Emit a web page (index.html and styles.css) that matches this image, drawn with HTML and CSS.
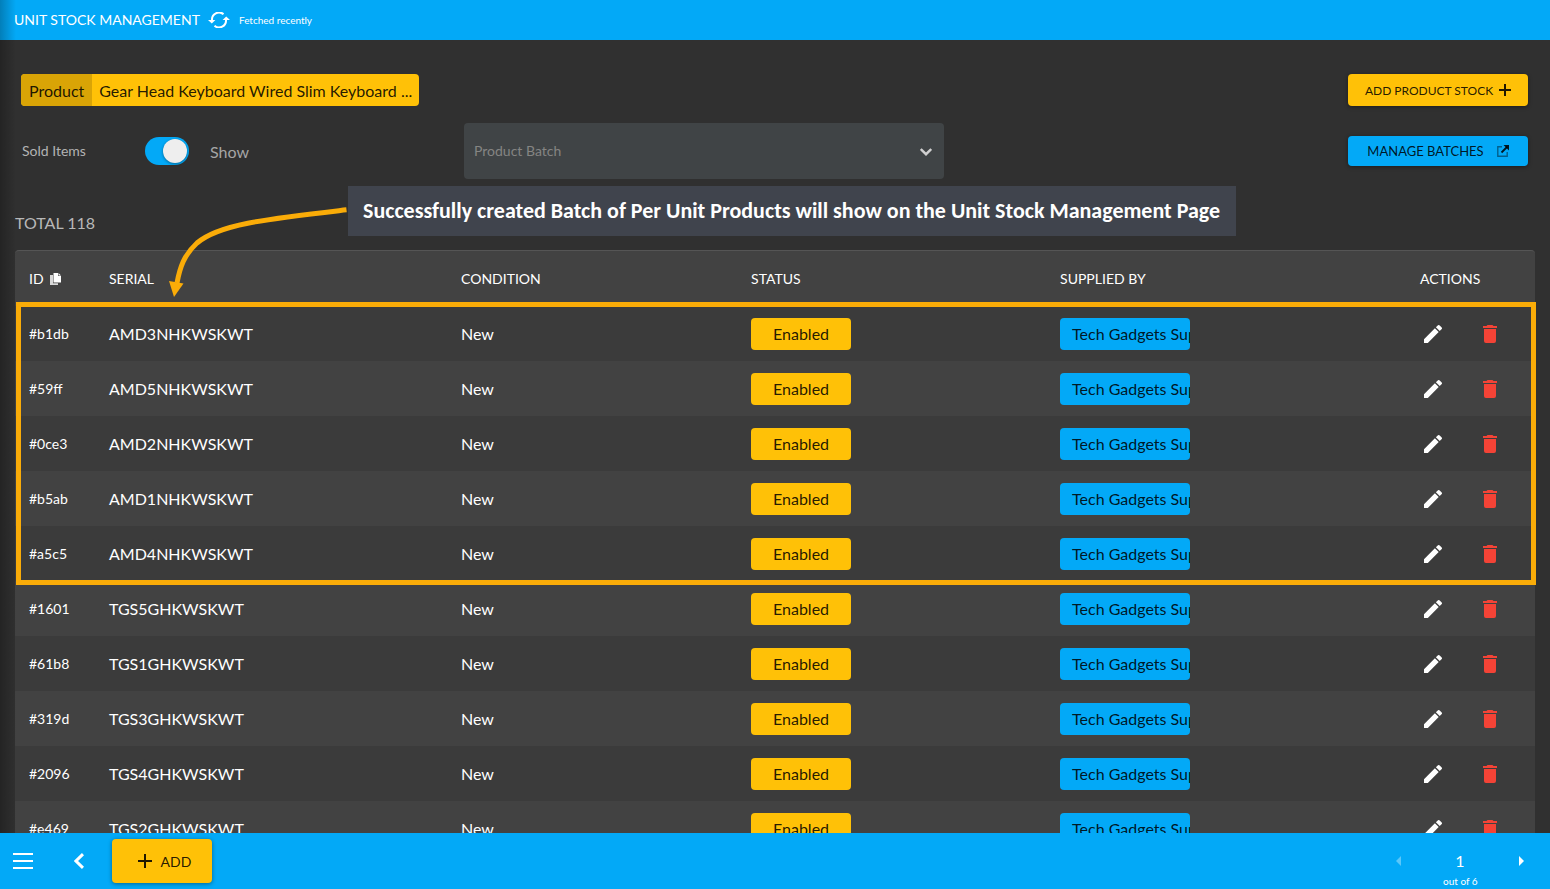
FILE: index.html
```html
<!DOCTYPE html>
<html lang="en">
<head>
<meta charset="utf-8">
<title>Unit Stock Management</title>
<link rel="stylesheet" href="styles.css">
</head>
<body>
<svg class="sprite" aria-hidden="true">
  <symbol id="pencil" viewBox="0 0 18 18"><path d="M0 14.2 10.9 3.3l3.8 3.8L3.8 18H0zM11.9 2.3 13.7.5a1.4 1.4 0 0 1 2 0l1.8 1.8a1.4 1.4 0 0 1 0 2l-1.8 1.8z"/></symbol>
  <symbol id="trash" viewBox="0 0 14 18"><path d="M0 1h3.500l1-1h5l1 1H14v2H0zM1 4h12v12a2 2 0 0 1-2 2H3a2 2 0 0 1-2-2z"/></symbol>
</svg>
<header class="topbar">
  <h1 class="topbar-title">UNIT STOCK MANAGEMENT</h1>
  <button class="icon-btn refresh" aria-label="Refresh">
    <svg width="22" height="16" viewBox="0 0 22 16" fill="none" stroke="currentColor" stroke-width="2"><path d="M15.5 2.2A7 7 0 0 0 4 8M6.5 13.8A7 7 0 0 0 18 8"/><path d="M0 8h7.4L3.8 11.400zM14.600 8H22L18.200 4.600z" fill="currentColor" stroke="none"/></svg>
  </button>
  <span class="topbar-note">Fetched recently</span>
</header>
<main class="content">
  <div class="product-row">
    <div class="product-chip"><span class="chip-label">Product</span><span class="chip-value">Gear Head Keyboard Wired Slim Keyboard ...</span></div>
    <button class="btn btn-amber btn-stock">ADD PRODUCT STOCK
      <svg width="12" height="12" viewBox="0 0 12 12" fill="none" stroke="currentColor" stroke-width="2"><path d="M6 0v12M0 6h12"/></svg>
    </button>
  </div>
  <div class="filter-row">
    <div class="sold">
      <label class="sold-label" for="sold">Sold Items</label>
      <input class="switch" id="sold" type="checkbox" role="switch" checked>
      <span class="sold-state">Show</span>
    </div>
    <div class="batch">
      <select class="batch-select" aria-label="Product Batch"><option>Product Batch</option></select>
      <svg class="batch-arrow" width="12" height="8" viewBox="0 0 12 8" fill="none" stroke="currentColor" stroke-width="2.400"><path d="m.8 1 5.200 5.200L11.200 1"/></svg>
    </div>
    <button class="btn btn-blue btn-batches">MANAGE BATCHES
      <svg width="12" height="12" viewBox="0 0 12 12" fill="none" stroke="currentColor"><path d="M5 1.800H.8v9.400h9.400V7" stroke-width="1.400" opacity=".5"/><path d="M4.500 7.500 10 2" stroke-width="1.800"/><path d="M6.500 0H12v5.500z" fill="currentColor" stroke="none"/></svg>
    </button>
  </div>
  <p class="total">TOTAL 118</p>
  <div class="table-wrap">
    <table class="stock">
      <colgroup><col class="col-id"><col class="col-serial"><col class="col-condition"><col class="col-status"><col class="col-supplier"><col class="col-actions"></colgroup>
      <thead>
        <tr><th>ID <svg class="copy" width="11" height="12" viewBox="0 0 11 12" fill="currentColor"><path d="M3.500 0H8v3h3v6.500H3.500z"/><path d="M8.500 0 11 2.500H8.500z"/><path d="M0 2h3v8.200h5V12H0z" opacity=".8"/></svg></th><th>SERIAL</th><th>CONDITION</th><th>STATUS</th><th>SUPPLIED BY</th><th>ACTIONS</th></tr>
      </thead>
      <tbody>
        <tr><td class="id">#b1db</td><td>AMD3NHKWSKWT</td><td>New</td><td><button class="tag tag-status">Enabled</button></td><td><button class="tag tag-supplier">Tech Gadgets Sup</button></td><td><div class="actions"><button class="icon-btn" aria-label="Edit"><svg width="18" height="18"><use href="#pencil"/></svg></button><button class="icon-btn delete" aria-label="Delete"><svg width="14" height="18"><use href="#trash"/></svg></button></div></td></tr>
        <tr><td class="id">#59ff</td><td>AMD5NHKWSKWT</td><td>New</td><td><button class="tag tag-status">Enabled</button></td><td><button class="tag tag-supplier">Tech Gadgets Sup</button></td><td><div class="actions"><button class="icon-btn" aria-label="Edit"><svg width="18" height="18"><use href="#pencil"/></svg></button><button class="icon-btn delete" aria-label="Delete"><svg width="14" height="18"><use href="#trash"/></svg></button></div></td></tr>
        <tr><td class="id">#0ce3</td><td>AMD2NHKWSKWT</td><td>New</td><td><button class="tag tag-status">Enabled</button></td><td><button class="tag tag-supplier">Tech Gadgets Sup</button></td><td><div class="actions"><button class="icon-btn" aria-label="Edit"><svg width="18" height="18"><use href="#pencil"/></svg></button><button class="icon-btn delete" aria-label="Delete"><svg width="14" height="18"><use href="#trash"/></svg></button></div></td></tr>
        <tr><td class="id">#b5ab</td><td>AMD1NHKWSKWT</td><td>New</td><td><button class="tag tag-status">Enabled</button></td><td><button class="tag tag-supplier">Tech Gadgets Sup</button></td><td><div class="actions"><button class="icon-btn" aria-label="Edit"><svg width="18" height="18"><use href="#pencil"/></svg></button><button class="icon-btn delete" aria-label="Delete"><svg width="14" height="18"><use href="#trash"/></svg></button></div></td></tr>
        <tr><td class="id">#a5c5</td><td>AMD4NHKWSKWT</td><td>New</td><td><button class="tag tag-status">Enabled</button></td><td><button class="tag tag-supplier">Tech Gadgets Sup</button></td><td><div class="actions"><button class="icon-btn" aria-label="Edit"><svg width="18" height="18"><use href="#pencil"/></svg></button><button class="icon-btn delete" aria-label="Delete"><svg width="14" height="18"><use href="#trash"/></svg></button></div></td></tr>
        <tr><td class="id">#1601</td><td>TGS5GHKWSKWT</td><td>New</td><td><button class="tag tag-status">Enabled</button></td><td><button class="tag tag-supplier">Tech Gadgets Sup</button></td><td><div class="actions"><button class="icon-btn" aria-label="Edit"><svg width="18" height="18"><use href="#pencil"/></svg></button><button class="icon-btn delete" aria-label="Delete"><svg width="14" height="18"><use href="#trash"/></svg></button></div></td></tr>
        <tr><td class="id">#61b8</td><td>TGS1GHKWSKWT</td><td>New</td><td><button class="tag tag-status">Enabled</button></td><td><button class="tag tag-supplier">Tech Gadgets Sup</button></td><td><div class="actions"><button class="icon-btn" aria-label="Edit"><svg width="18" height="18"><use href="#pencil"/></svg></button><button class="icon-btn delete" aria-label="Delete"><svg width="14" height="18"><use href="#trash"/></svg></button></div></td></tr>
        <tr><td class="id">#319d</td><td>TGS3GHKWSKWT</td><td>New</td><td><button class="tag tag-status">Enabled</button></td><td><button class="tag tag-supplier">Tech Gadgets Sup</button></td><td><div class="actions"><button class="icon-btn" aria-label="Edit"><svg width="18" height="18"><use href="#pencil"/></svg></button><button class="icon-btn delete" aria-label="Delete"><svg width="14" height="18"><use href="#trash"/></svg></button></div></td></tr>
        <tr><td class="id">#2096</td><td>TGS4GHKWSKWT</td><td>New</td><td><button class="tag tag-status">Enabled</button></td><td><button class="tag tag-supplier">Tech Gadgets Sup</button></td><td><div class="actions"><button class="icon-btn" aria-label="Edit"><svg width="18" height="18"><use href="#pencil"/></svg></button><button class="icon-btn delete" aria-label="Delete"><svg width="14" height="18"><use href="#trash"/></svg></button></div></td></tr>
        <tr><td class="id">#e469</td><td>TGS2GHKWSKWT</td><td>New</td><td><button class="tag tag-status">Enabled</button></td><td><button class="tag tag-supplier">Tech Gadgets Sup</button></td><td><div class="actions"><button class="icon-btn" aria-label="Edit"><svg width="18" height="18"><use href="#pencil"/></svg></button><button class="icon-btn delete" aria-label="Delete"><svg width="14" height="18"><use href="#trash"/></svg></button></div></td></tr>
      </tbody>
    </table>
    <div class="highlight"></div>
    <div class="callout">Successfully created Batch of Per Unit Products will show on the Unit Stock Management Page</div>
    <svg class="arrow" width="180" height="90" viewBox="0 0 180 90"><path d="M179.500 2.800C100 12 52 17 30 36C17 48 13 60 10 76" fill="none" stroke="#faac08" stroke-width="5"/><path d="M2 74 16.500 76.500 7 90z" fill="#faac08"/></svg>
  </div>
</main>
<footer class="bottombar">
  <button class="icon-btn" aria-label="Menu"><svg width="20" height="16" viewBox="0 0 20 16" fill="currentColor"><path d="M0 0h20v2H0zM0 7h20v2H0zM0 14h20v2H0z"/></svg></button>
  <button class="icon-btn back" aria-label="Back"><svg width="10" height="16" viewBox="0 0 10 16" fill="none" stroke="currentColor" stroke-width="3"><path d="M9 1.200 2 8l7 6.800"/></svg></button>
  <button class="btn btn-amber btn-add"><svg width="14" height="14" viewBox="0 0 14 14" fill="none" stroke="currentColor" stroke-width="2"><path d="M7 0v14M0 7h14"/></svg>ADD</button>
  <nav class="pager" aria-label="Pages">
    <button class="icon-btn" aria-label="Previous page" disabled><svg width="5" height="10" viewBox="0 0 5 10" fill="currentColor"><path d="M5 0v10L0 5z"/></svg></button>
    <div class="page"><span class="page-number">1</span><span class="page-total">out of 6</span></div>
    <button class="icon-btn" aria-label="Next page"><svg width="5" height="10" viewBox="0 0 5 10" fill="currentColor"><path d="M0 0v10l5-5z"/></svg></button>
  </nav>
</footer>
</body>
</html>
```
FILE: styles.css
```css
* { box-sizing: border-box; }

body {
  position: relative;
  display: flex;
  flex-direction: column;
  height: 100vh;
  margin: 0;
  overflow: hidden;
  background: #303030;
  color: #fff;
  font-family: Lato, "Liberation Sans", sans-serif;
  font-size: 16px;
  line-height: 20px;
}

/* Shade cast by the side drawer */
body::before {
  content: "";
  position: absolute;
  z-index: 3;
  top: 0;
  bottom: 56px;
  left: 0;
  width: 16px;
  background: linear-gradient(to right, rgba(0, 0, 0, .25), rgba(0, 0, 0, 0));
  pointer-events: none;
}

button, select { font-family: inherit; }
svg { display: block; }
.sprite { position: absolute; width: 0; height: 0; }

.icon-btn {
  display: flex;
  padding: 0;
  border: 0;
  background: none;
  color: #fff;
  fill: currentColor;
}
.icon-btn:disabled { opacity: .35; }
.icon-btn.delete { color: #f44336; }

.topbar {
  flex: none;
  display: flex;
  align-items: center;
  height: 40px;
  padding: 0 14px;
  background: #03a9f7;
}
.topbar-title { margin: 0; font-size: 14px; font-weight: 400; }
.refresh { margin: 0 9px 0 8px; }
.topbar-note { font-size: 10px; }

.content {
  flex: 1;
  min-height: 0;
  padding: 34px 15px 0;
  overflow: hidden;
}

.product-row {
  display: flex;
  justify-content: space-between;
  padding: 0 7px 0 6px;
}
.product-chip {
  display: flex;
  overflow: hidden;
  border-radius: 4px;
  background: #ffc107;
  color: rgba(0, 0, 0, .87);
  line-height: 34px;
  height: 32px;
}
.chip-label { padding: 0 8px; background: #d9a406; }
.chip-value { padding: 0 7px; }

.btn {
  display: flex;
  align-items: center;
  justify-content: center;
  border: 0;
  border-radius: 4px;
  color: rgba(0, 0, 0, .87);
  box-shadow: 0 1px 4px rgba(0, 0, 0, .4);
}
.btn-amber { background: #ffc107; }
.btn-blue { background: #03a9f7; }
.btn-stock { width: 180px; height: 32px; gap: 6px; font-size: 12px; }
.btn-batches { width: 180px; height: 30px; gap: 13px; font-size: 13px; justify-self: end; }

.filter-row {
  display: grid;
  grid-template-columns: 443fr 480fr 584fr;
  align-items: center;
  margin-top: 17px;
  padding: 0 7px 0 6px;
}
.sold { display: flex; align-items: center; color: #b3b3b3; }
.sold-label { width: 124px; padding-left: 1px; font-size: 14px; }
.switch {
  appearance: none;
  width: 44px;
  height: 28px;
  margin: 0 21px 0 0;
  padding: 2px 2px 2px 18px;
  border-radius: 14px;
  background: #03a9f7;
}
.switch::before {
  content: "";
  display: block;
  width: 24px;
  height: 24px;
  border-radius: 50%;
  background: #eee;
  box-shadow: 0 1px 3px rgba(0, 0, 0, .4);
}
.sold-state { padding-top: 2px; color: #a5a5a5; }

.batch { position: relative; }
.batch-select {
  appearance: none;
  display: block;
  width: 100%;
  height: 56px;
  padding: 0 10px 2px;
  border: 0;
  border-radius: 4px;
  background: #404446;
  color: #858583;
  font-size: 14px;
}
.batch-arrow {
  position: absolute;
  top: 25px;
  right: 12px;
  color: #d0d0d0;
  pointer-events: none;
}

.total { margin: 34px 0 17px; color: #b8b8b8; }

.table-wrap { position: relative; }
.stock {
  width: 100%;
  table-layout: fixed;
  border-collapse: separate;
  border-spacing: 0;
  border-top: 1px solid #555;
  border-radius: 4px 4px 0 0;
  background: #424242;
}
.col-id { width: 80px; }
.col-serial { width: 23.16%; }
.col-condition { width: 19.08%; }
.col-status { width: 20.33%; }
.col-actions { width: 129px; }
.stock th, .stock td {
  height: 55px;
  padding: 0 0 0 14px;
  text-align: left;
  font-weight: 400;
}
.stock th { font-size: 14px; }
.stock tbody tr:nth-child(odd) { background: #3b3b3b; }
.stock .id { font-size: 14px; }
.copy { display: inline-block; margin-left: 3px; vertical-align: -1px; }

.tag {
  display: block;
  height: 32px;
  overflow: hidden;
  border: 0;
  border-radius: 4px;
  color: rgba(0, 0, 0, .87);
  font-size: 16px;
  line-height: 32px;
  white-space: nowrap;
}
.tag-status { width: 100px; padding: 0; background: #ffc107; }
.tag-supplier { width: 130px; padding: 0 0 0 12px; background: #03a9f7; text-align: left; }
.actions { display: flex; gap: 41px; padding-left: 4px; }

/* Walkthrough annotation over the table */
.highlight {
  position: absolute;
  z-index: 2;
  top: 52px;
  left: 1px;
  right: -1px;
  height: 283px;
  border: 5px solid #faac08;
}
.callout {
  position: absolute;
  z-index: 2;
  top: -64px;
  left: 333px;
  padding: 10px 16px 10px 15px;
  background: #40444d;
  font-family: Carlito, Lato, sans-serif;
  font-size: 22px;
  font-weight: 700;
  line-height: 30px;
  white-space: nowrap;
}
.arrow { position: absolute; z-index: 2; top: -43px; left: 152px; }

.bottombar {
  flex: none;
  display: flex;
  align-items: center;
  height: 56px;
  padding: 0 26px 0 13px;
  background: #03a9f7;
}
.back { margin: 0 28px 0 41px; }
.btn-add { width: 100px; height: 44px; gap: 9px; padding: 0 0 0 5px; font-size: 14px; }
.pager { display: flex; align-items: center; gap: 42px; margin-left: auto; }
.page { position: relative; width: 34px; text-align: center; }
.page-number { display: block; }
.page-total {
  position: absolute;
  top: 20px;
  left: 0;
  right: 0;
  font-size: 10px;
  white-space: nowrap;
}
```
